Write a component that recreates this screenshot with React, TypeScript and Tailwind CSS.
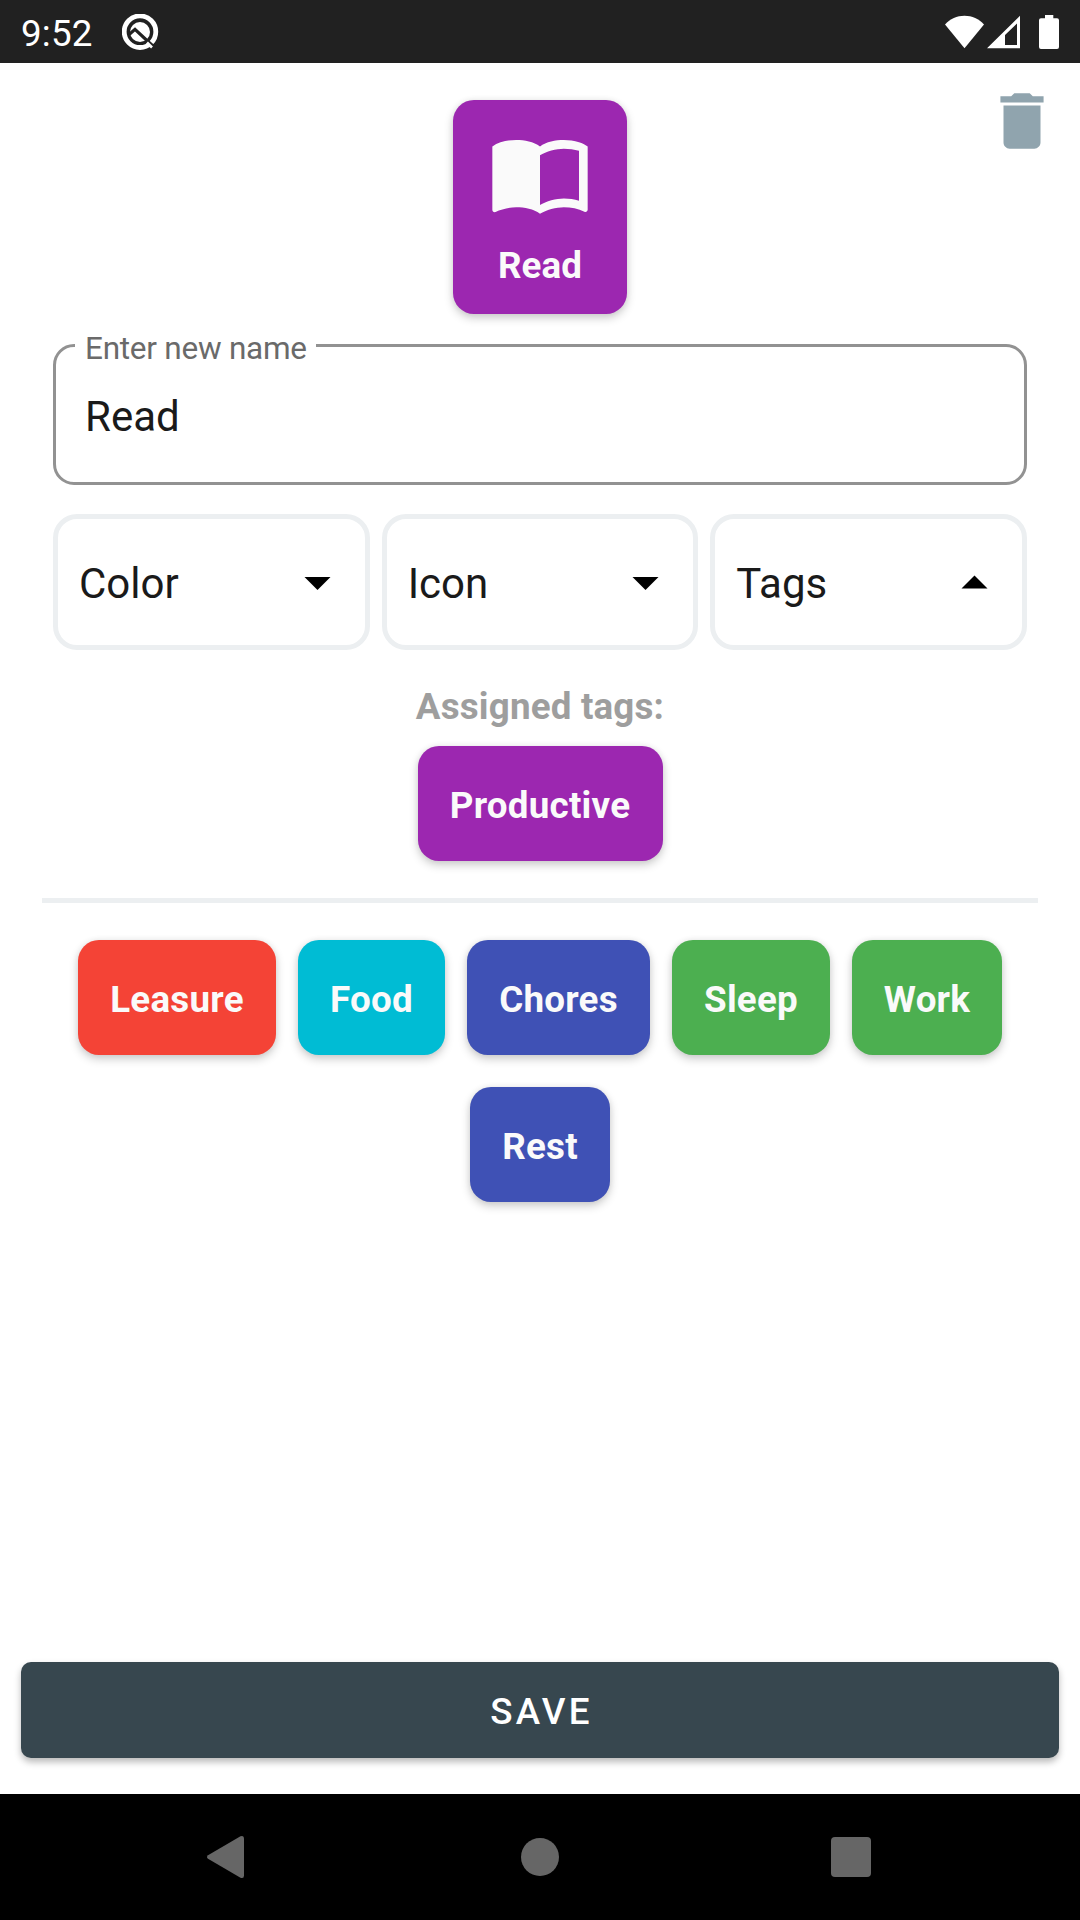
import React from "react";

const chipShadow = "shadow-[0_4px_10px_rgba(0,0,0,0.2),0_0_6px_rgba(0,0,0,0.06)]";

function StatusBar() {
  return (
    <header className="flex h-[63px] shrink-0 items-center bg-[#212121] pr-[21px] pl-[21px] text-white">
      <span className="w-[101px] pt-[4px] text-[36.75px] leading-[42px] tracking-[0.2px]">9:52</span>
      <svg className="mt-[1px] h-[37px] w-[37px]" viewBox="0 0 37 37" fill="none">
        <circle cx="18" cy="17.700" r="15.800" stroke="#fff" strokeWidth="4.800" />
        <circle cx="18" cy="18" r="10" fill="#fff" />
        <path d="M6.500 21 L13 15.300 L32.500 33.500" stroke="#212121" strokeWidth="3.200" />
        <path d="M25 28.500 L30 33.500" stroke="#fff" strokeWidth="2.600" />
      </svg>
      <div className="ml-auto flex items-center">
        <svg className="h-[34px] w-[40px]" viewBox="0 0 40 34" fill="#fff">
          <path d="M19.500 33.200 0 9.500C5 4 12 .7 19.500.7S34 4 39 9.500Z" />
        </svg>
        <svg className="ml-[2px] h-[34px] w-[34px]" viewBox="0 0 34 34">
          <path fill="#fff" fillRule="evenodd" d="M0 33.300 33 .7v32.600ZM18 30h12V8.500L18 20Z" />
        </svg>
        <svg className="ml-[18px] h-[34px] w-[20px]" viewBox="0 0 20 34" fill="#fff">
          <path d="M6 0h8.300v3.300H18a2 2 0 0 1 2 2V32a2 2 0 0 1-2 2H2a2 2 0 0 1-2-2V5.300a2 2 0 0 1 2-2h4Z" />
        </svg>
      </div>
    </header>
  );
}

function ActivityCard() {
  return (
    <div className={`flex h-[214px] w-[174px] flex-col items-center rounded-[21px] bg-[#9c27b0] pt-[20px] text-[#fafafa] ${chipShadow}`}>
      <svg className="h-[105px] w-[104px]" viewBox="0 0 24 24" fill="currentColor">
        <path d="M21 5c-1.110-.350-2.330-.500-3.500-.500-1.950 0-4.050.400-5.500 1.500-1.450-1.100-3.550-1.500-5.500-1.500S2.450 4.900 1 6v14.650c0 .250.250.500.500.500.100 0 .150-.050.250-.050C3.100 20.450 5.050 20 6.500 20c1.950 0 4.050.400 5.500 1.500 1.350-.850 3.800-1.500 5.500-1.500 1.650 0 3.350.300 4.750 1.050.100.050.150.050.250.050.250 0 .500-.250.500-.500V6c-.600-.450-1.250-.750-2-1zm0 13.500c-1.100-.350-2.300-.500-3.500-.500-1.700 0-4.150.650-5.500 1.500V8c1.350-.850 3.800-1.500 5.500-1.500 1.200 0 2.400.150 3.500.500v11.500z" />
      </svg>
      <span className="mt-[20px] text-[36.75px] leading-[42px] font-bold tracking-[0.1px]">Read</span>
    </div>
  );
}

function NameField() {
  return (
    <div className="relative mt-[30px] flex h-[141px] w-[974px] items-center rounded-[21px] border-[3px] border-[#929292] pt-[4px] pl-[29px]">
      <span className="absolute -top-[16px] left-[19px] w-[241px] bg-white pl-[10px] text-[31.5px] leading-[36px] tracking-[-0.25px] whitespace-nowrap text-[#6a6a6a]">
        Enter new name
      </span>
      <span className="text-[42px] leading-[50px] text-[#1a1a1a]">Read</span>
    </div>
  );
}

function Dropdown({ label, open = false }: { label: string; open?: boolean }) {
  return (
    <button className="flex h-[136px] flex-1 items-center justify-between rounded-[24px] border-[5px] border-[#eceff1] pr-[34px] pl-[21px]">
      <span className="pt-[4px] text-[42px] leading-[50px] text-[#1a1a1a]">{label}</span>
      <svg className="h-[15px] w-[27px]" viewBox="0 0 27 15" fill="#000">
        {open ? <path d="M.500 13.500 13.500.500l13 13Z" /> : <path d="M.500 2h26l-13 13Z" />}
      </svg>
    </button>
  );
}

function Chip({ label, look }: { label: string; look: string }) {
  return (
    <div className={`flex h-[115px] items-center justify-center rounded-[21px] pt-[5px] text-[36.75px] leading-[42px] font-bold tracking-[0.24px] text-[#fafafa] ${chipShadow} ${look}`}>
      {label}
    </div>
  );
}

const availableTags = [
  { label: "Leasure", look: "w-[198px] bg-[#f44336]" },
  { label: "Food", look: "w-[147px] bg-[#00bcd4]" },
  { label: "Chores", look: "w-[183px] bg-[#3f51b5]" },
  { label: "Sleep", look: "w-[158px] bg-[#4caf50]" },
  { label: "Work", look: "w-[150px] bg-[#4caf50]" },
  { label: "Rest", look: "w-[140px] bg-[#3f51b5]" },
];

function NavigationBar() {
  return (
    <nav className="flex h-[126px] shrink-0 items-center bg-black pl-[206px]">
      <svg className="h-[44px] w-[38px]" viewBox="0 0 38 44" fill="#666">
        <path d="M2 20.200 34.500 1.300Q38 0 38 3.500v37Q38 44 34.500 42.700L2 23.800Q0 22 2 20.200Z" />
      </svg>
      <div className="ml-[277px] h-[38px] w-[38px] rounded-full bg-[#666]" />
      <div className="ml-[272px] h-[40px] w-[40px] rounded-[4px] bg-[#666]" />
    </nav>
  );
}

export default function App() {
  return (
    <div className="flex h-[1920px] w-[1080px] flex-col overflow-hidden bg-white font-['Roboto',sans-serif]">
      <StatusBar />
      <main className="relative flex flex-1 flex-col items-center pt-[37px]">
        <button className="absolute top-[21px] right-[21px]" aria-label="Delete">
          <svg className="h-[74px] w-[74px]" viewBox="0 0 24 24" fill="#90a4ae">
            <path d="M6 19c0 1.100.900 2 2 2h8c1.100 0 2-.900 2-2V7H6v12zM19 4h-3.500l-1-1h-5l-1 1H5v2h14V4z" />
          </svg>
        </button>
        <ActivityCard />
        <NameField />
        <div className="mt-[29px] flex w-[974px] gap-[12px]">
          <Dropdown label="Color" />
          <Dropdown label="Icon" />
          <Dropdown label="Tags" open />
        </div>
        <h2 className="mt-[36px] mb-[18px] text-[36.75px] leading-[42px] font-bold tracking-[0.18px] text-[#9e9e9e]">Assigned tags:</h2>
        <Chip label="Productive" look="w-[245px] bg-[#9c27b0]" />
        <div className="mt-[37px] h-[5px] w-[996px] bg-[#eceff1]" />
        <div className="mt-[37px] flex w-[996px] flex-wrap justify-center gap-x-[22px] gap-y-[32px]">
          {availableTags.map((tag) => (
            <Chip key={tag.label} label={tag.label} look={tag.look} />
          ))}
        </div>
        <button className="mt-auto mb-[36px] flex h-[96px] w-[1038px] items-center justify-center rounded-[10px] bg-[#37474f] pt-[4px] pl-[3px] text-[36.75px] leading-[42px] font-medium tracking-[3.28px] text-white shadow-[0_4px_7px_rgba(0,0,0,0.28)]">
          SAVE
        </button>
      </main>
      <NavigationBar />
    </div>
  );
}
